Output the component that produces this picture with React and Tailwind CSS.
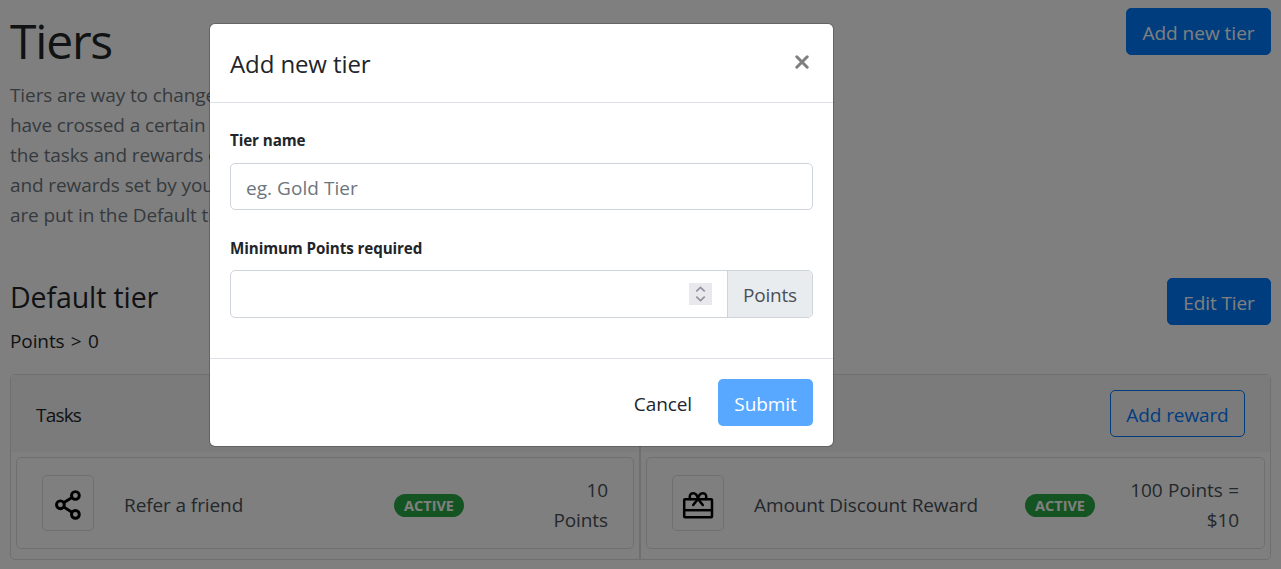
function ShareIcon() {
  return (
    <svg width="30" height="34" viewBox="0 0 30 34" fill="none" stroke="#000" strokeWidth="2.9">
      <circle cx="7.4" cy="18.8" r="3.9" />
      <circle cx="22.4" cy="9.5" r="3.9" />
      <circle cx="22.4" cy="28.4" r="3.9" />
      <path d="M10.6 16.7 19 11.6M10.6 20.9 19 26.3" />
    </svg>
  );
}

function GiftIcon() {
  return (
    <svg width="32" height="32" viewBox="0 0 32 32" fill="none" stroke="#000" strokeWidth="2.5" strokeLinecap="round" strokeLinejoin="round">
      <rect x="2.2" y="12.2" width="27.8" height="18" rx="0.8" />
      <path d="M2.2 23.2H30" strokeLinecap="butt" />
      <path d="M8.4 12C6.6 9 8.4 6.2 11.2 6.2 13.8 6.2 15.4 8.4 16 12.2M23.6 12C25.4 9 23.6 6.2 20.8 6.2 18.2 6.2 16.6 8.4 16 12.2M16 12 11.2 18M16 12 20.8 18" />
    </svg>
  );
}

function Button({ children, className }) {
  return (
    <button className={`h-[47px] shrink-0 rounded-[5px] border border-[#007bff] pt-[3px] text-center whitespace-nowrap ${className}`}>
      {children}
    </button>
  );
}

function ItemRow({ icon, name, value, className }) {
  return (
    <div className={`flex h-[92px] items-center rounded-[5px] border border-[#dfdfdf] px-[25px] text-[#495057] ${className}`}>
      <div className="flex h-14 w-[52px] shrink-0 items-center justify-center rounded-[5px] border border-[#dfdfdf]">
        {icon}
      </div>
      <div className="ml-[30px] w-[270px] shrink-0 grow pt-1">{name}</div>
      <span className="mt-1 h-[23px] w-[70px] shrink-0 rounded-full bg-[#28a745] text-center text-[14.5px] leading-[24px] font-bold tracking-[0px] text-white">
        ACTIVE
      </span>
      <div className="w-[144px] shrink-0 pt-1 text-right whitespace-pre-line [word-spacing:0.8px]">{value}</div>
    </div>
  );
}

function Page() {
  return (
    <div className="flex h-full flex-col px-[10px] pt-2">
      <div className="flex h-[272px] items-start justify-between">
        <div>
          <h1 className="h-[72px] text-[48px] leading-[66px] tracking-[-1.2px] text-[#212529]">Tiers</h1>
          <p className="w-[240px] whitespace-nowrap text-[#6c757d]">
            Tiers are way to change
            <br />
            have crossed a certain
            <br />
            the tasks and rewards of
            <br />
            and rewards set by you
            <br />
            are put in the Default tier
          </p>
        </div>
        <Button className="w-[145px] bg-[#007bff] tracking-normal text-white">Add new tier</Button>
      </div>
      <div className="flex items-start justify-between">
        <div className="h-[94px] text-[#212529]">
          <h2 className="mt-[-1px] text-[28.5px] leading-9 tracking-[-0.1px]">Default tier</h2>
          <p className="mt-[11px] [word-spacing:1.5px]">Points &gt; 0</p>
        </div>
        <Button className="mt-[-2px] w-[104px] bg-[#007bff] text-white">Edit Tier</Button>
      </div>
      <div className="flex h-[186px] text-[#212529]">
        <section className="w-[630px] rounded-l-[5px] border border-[#dfdfdf]">
          <header className="flex h-[77px] items-center bg-[#f7f7f7] pt-[3px] pl-[25px] tracking-[-0.8px]">Tasks</header>
          <ItemRow className="mx-[5px] mt-[5px]" icon={<ShareIcon />} name="Refer a friend" value={"10\nPoints"} />
        </section>
        <section className="w-[631px] rounded-r-[5px] border border-[#dfdfdf]">
          <header className="flex h-[77px] items-center justify-end bg-[#f7f7f7] pr-[25px]">
            <Button className="w-[135px] text-[#007bff]">Add reward</Button>
          </header>
          <ItemRow className="mx-[5px] mt-[5px]" icon={<GiftIcon />} name="Amount Discount Reward" value={"100 Points =\n$10"} />
        </section>
      </div>
    </div>
  );
}

function Modal() {
  return (
    <div className="mt-[23px] ml-[209px] h-[424px] w-[625px] rounded-[6px] border border-black/20 bg-white bg-clip-padding text-[#212529]">
      <header className="flex h-[79px] items-center justify-between border-b border-[#dee2e6] px-5">
        <h3 className="pt-0.5 text-[24px]">Add new tier</h3>
        <svg className="mr-1 mb-[3px]" width="14" height="14" viewBox="0 0 14 14" fill="none" stroke="#7f7f7f" strokeWidth="3" strokeLinecap="round">
          <path d="M1.8 1.8 12.2 12.2M12.2 1.8 1.8 12.2" />
        </svg>
      </header>
      <div className="h-[255px] px-5 pt-6">
        <label className="block h-[36px] text-[15.2px] leading-[27px] font-bold">Tier name</label>
        <input className="block h-[47px] w-full rounded-[5px] border border-[#ced4da] px-[15px] pt-[2px] tracking-[0.05px] placeholder:text-[#6c757d]" placeholder="eg. Gold Tier" />
        <label className="mt-[25px] block h-[35px] text-[15.2px] leading-[27px] font-bold">Minimum Points required</label>
        <div className="flex h-12 rounded-[5px] border border-[#ced4da]">
          <div className="flex grow items-center justify-end pr-[15px]">
            <div className="flex h-[22px] w-[23px] items-center justify-center bg-[#e9e9ed]">
              <svg width="11" height="16" viewBox="0 0 11 16" fill="none" stroke="#8f8f9d" strokeWidth="1.6">
                <path d="M1.3 5.3 5.5 1.3 9.7 5.3M1.3 10.7 5.5 14.7 9.7 10.7" />
              </svg>
            </div>
          </div>
          <div className="flex w-[85px] items-center justify-center rounded-r-[4px] border-l border-[#ced4da] bg-[#e9ecef] pt-[2px] tracking-[-0.2px] text-[#495057]">Points</div>
        </div>
      </div>
      <footer className="flex h-[88px] items-center justify-end border-t border-[#dee2e6] px-5">
        <button className="mr-[26px] pt-0.5">Cancel</button>
        <button className="h-[47px] w-[95px] rounded-[5px] bg-[#59a8ff] pt-0.5 text-white">Submit</button>
      </footer>
    </div>
  );
}

export default function App() {
  return (
    <main className="h-[569px] w-full overflow-hidden bg-white font-['Open_Sans','Noto_Sans',sans-serif] text-[19px] leading-[30px] tracking-[-0.1px]">
      <Page />
      <div className="absolute inset-0 bg-black/50">
        <Modal />
      </div>
    </main>
  );
}
